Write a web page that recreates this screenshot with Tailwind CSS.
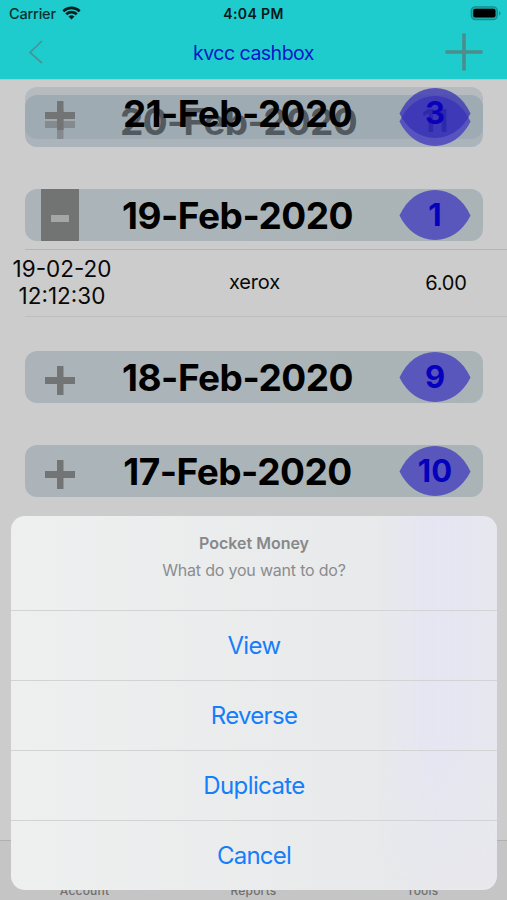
<!DOCTYPE html>
<html lang="en">
<head>
<meta charset="utf-8">
<title>kvcc cashbox</title>
<script src="https://cdn.jsdelivr.net/npm/@tailwindcss/browser@4"></script>
</head>
<body class="w-[507px] h-[900px] overflow-hidden bg-[#cccccc] font-['Inter','Liberation_Sans',sans-serif] text-black">
<svg class="hidden">
  <symbol id="plus" viewBox="0 0 30 29"><path d="M12 0h6.500v11h11.500v7h-11.500v11h-6.500v-11h-12v-7h12z" fill="#737575"/></symbol>
  <symbol id="eye" viewBox="0 0 72 50"><path d="M.5 25.500C8 9 21 0 36 0s28 9 35.500 25.500C64 41 51 50 36 50S8 41 .5 25.500z" fill="currentColor"/></symbol>
</svg>
<div class="relative flex h-full flex-col">
  <header class="h-[80px] shrink-0 bg-[#1fcccd] border-b border-[#9fcccd]">
    <div class="grid h-[27px] grid-cols-[1fr_auto_1fr] items-center pl-[9px] pr-[5px] text-[14.5px]">
      <div class="flex items-center gap-[6px] text-[#07302f] font-medium"><span class="tracking-[-0.2px]">Carrier</span>
        <svg class="h-[14px] w-[19px] -translate-y-px" viewBox="0 0 19 14" fill="none" stroke="#051e1e" stroke-width="2.600"><path d="M1.300 5.200C6 .7 13 .7 17.700 5.200M4.200 8.200c3-2.800 7.600-2.800 10.600 0"/><path d="M9.500 13.400 6.500 10.400c1.700-1.500 4.300-1.500 6 0z" fill="#051e1e" stroke="none"/></svg>
      </div>
      <span class="-translate-x-[2px] font-semibold text-[14px] tracking-[0.4px] text-[#03191a]">4:04 PM</span>
      <svg class="h-[15px] w-[32px] justify-self-end" viewBox="0 0 32 15"><rect x="1.300" y=".8" width="26" height="12.800" rx="4" fill="#1fa9aa" stroke="#168f90" stroke-width="1.300"/><rect x="3.200" y="2.800" width="22.300" height="8.800" rx="2" fill="#000"/><path d="M29 5q3 2.300 0 4.600z" fill="#168f90"/></svg>
    </div>
    <div class="grid h-[50px] grid-cols-[1fr_auto_1fr] items-center pl-[28px] pr-[24px]">
      <svg class="h-[24px] w-[16px]" viewBox="0 0 16 24" fill="none" stroke="#499394" stroke-width="1.700"><path d="M14 1 2 12.500 14 23"/></svg>
      <span class="translate-x-[-2px] pt-[3px] text-[19.5px] tracking-[-0.5px] text-[#0618c8]">kvcc cashbox</span>
      <svg class="h-[38px] w-[38px] justify-self-end" viewBox="0 0 38 38" stroke="#4a8e8e" stroke-width="3.600"><path d="M19 .5v37M.5 19h37"/></svg>
    </div>
  </header>

  <main class="flex flex-col pt-[7px]">
    <section class="relative ml-[25px] grid h-[60px] w-[458px] grid-cols-[458px]">
      <div class="col-start-1 row-start-1 mt-[8px] grid h-[52px] grid-cols-[96px_235px_127px] items-center rounded-[12px] bg-[#aab4ba]">
        <svg class="ml-[20px] mt-[6px] h-[29px] w-[30px] opacity-60"><use href="#plus"/></svg>
        <span class="flex justify-center text-[37px] font-bold leading-none tracking-[-0.7px] text-[#33383b] whitespace-nowrap">20-Feb-2020</span>
        <div class="relative ml-[43px] flex h-[50px] w-[72px] items-center justify-center text-[#5754bf]"><svg class="absolute inset-0 h-[50px] w-[72px]"><use href="#eye"/></svg><span class="relative text-[31px] font-bold text-[#1a1590]">11</span></div>
      </div>
      <div class="col-start-1 row-start-1 grid h-[52px] grid-cols-[96px_235px_127px] items-center rounded-[12px] bg-[#8c9ca6]/35">
        <svg class="ml-[20px] mt-[4px] h-[29px] w-[30px]"><use href="#plus"/></svg>
        <span class="-translate-x-px text-center text-[37px] font-bold leading-none tracking-[-0.6px] whitespace-nowrap">21-Feb-2020</span>
        <div class="relative ml-[43px] flex h-[50px] w-[72px] items-center justify-center text-[#3530b4]/75"><svg class="absolute inset-0 h-[50px] w-[72px]"><use href="#eye"/></svg><span class="relative text-[31px] font-bold text-[#0a00bb]">3</span></div>
      </div>
    </section>

    <section class="ml-[25px] mt-[42px] grid h-[52px] w-[458px] grid-cols-[96px_235px_127px] items-center rounded-[12px] bg-linear-to-r from-[#acb4ba] to-[#aab4b6]">
      <div class="ml-[16px] flex h-[52px] w-[38px] justify-center bg-[#727373] pt-[26px]"><span class="h-[7px] w-[18px] bg-[#a4a7a8]"></span></div>
      <span class="-translate-x-px text-center text-[37px] font-bold leading-none tracking-[-0.5px] whitespace-nowrap">19-Feb-2020</span>
      <div class="relative ml-[43px] flex h-[50px] w-[72px] items-center justify-center text-[#5956bc]"><svg class="absolute inset-0 h-[50px] w-[72px]"><use href="#eye"/></svg><span class="relative text-[31px] font-bold text-[#0500bb]">1</span></div>
    </section>

    <div class="ml-[25px] mt-[8px] h-px bg-[#b5b5b6]"></div>
    <div class="grid h-[66px] grid-cols-[124px_1fr_122px] items-center text-center text-[#080808]">
      <p class="-mt-[2px] text-[22.5px] leading-[27.5px] tracking-[0px]">19-02-20<br>12:12:30</p>
      <p class="-mt-[2px] text-[20px] tracking-[-0.2px]">xerox</p>
      <p class="text-[20px] tracking-[-0.2px]">6.00</p>
    </div>
    <div class="ml-[25px] h-px bg-[#bebebe]"></div>

    <section class="ml-[25px] mt-[34px] grid h-[52px] w-[458px] grid-cols-[96px_235px_127px] items-center rounded-[12px] bg-linear-to-r from-[#acb4ba] to-[#aab4b6]">
      <svg class="ml-[20px] mt-[6px] h-[29px] w-[30px]"><use href="#plus"/></svg>
      <span class="-translate-x-px text-center text-[37px] font-bold leading-none tracking-[-0.5px] whitespace-nowrap">18-Feb-2020</span>
      <div class="relative ml-[43px] flex h-[50px] w-[72px] items-center justify-center text-[#5956bc]"><svg class="absolute inset-0 h-[50px] w-[72px]"><use href="#eye"/></svg><span class="relative text-[31px] font-bold text-[#0500bb]">9</span></div>
    </section>
    <section class="ml-[25px] mt-[42px] grid h-[52px] w-[458px] grid-cols-[96px_235px_127px] items-center rounded-[12px] bg-linear-to-r from-[#acb4ba] to-[#aab4b6]">
      <svg class="ml-[20px] mt-[6px] h-[29px] w-[30px]"><use href="#plus"/></svg>
      <span class="-translate-x-px text-center text-[37px] font-bold leading-none tracking-[-0.5px] whitespace-nowrap">17-Feb-2020</span>
      <div class="relative ml-[43px] flex h-[50px] w-[72px] items-center justify-center text-[#5956bc]"><svg class="absolute inset-0 h-[50px] w-[72px]"><use href="#eye"/></svg><span class="relative text-[31px] font-bold text-[#0500bb]">10</span></div>
    </section>
  </main>

  <nav class="mt-auto grid h-[60px] shrink-0 grid-cols-3 items-end border-t border-[#b0b0b0] bg-[#c5c5c5] pb-[2px] text-center text-[12px] font-medium leading-[15px] tracking-[0.2px] text-[#707070]">
    <span>Account</span><span>Reports</span><span>Tools</span>
  </nav>

  <div class="absolute left-[11px] top-[516px] flex h-[374px] w-[486px] flex-col overflow-hidden rounded-[14px] bg-linear-to-r from-[#eef0f0] via-[#e9eaeb] via-70% to-[#e8e8ee] text-center">
    <div class="absolute inset-y-0 right-0 w-[120px] bg-linear-to-r from-[#e4e4f4]/0 via-[#e5e5f3] via-50% to-[#e4e4f4]/20 mask-b-from-60% mask-b-to-100%"></div>
    <div class="relative h-[94px] pt-[16px] text-[#87888a]">
      <p class="text-[16px] font-semibold leading-[22px] tracking-[0px]">Pocket Money</p>
      <p class="mt-[5px] text-[16px] leading-[22px] tracking-[-0.2px] text-[#8b8c8e]">What do you want to do?</p>
    </div>
    <button class="relative h-[70px] border-t border-[#d2d3d5] text-[24px] tracking-[-0.6px] text-[#157efb]">View</button>
    <button class="relative h-[70px] border-t border-[#d2d3d5] text-[24px] tracking-[-0.7px] text-[#157efb]">Reverse</button>
    <button class="relative h-[70px] border-t border-[#d2d3d5] text-[24px] tracking-[-0.6px] text-[#157efb]">Duplicate</button>
    <button class="relative h-[70px] border-t border-[#d2d3d5] text-[24px] tracking-[-0.8px] text-[#157efb]">Cancel</button>
  </div>
</div>
</body>
</html>
